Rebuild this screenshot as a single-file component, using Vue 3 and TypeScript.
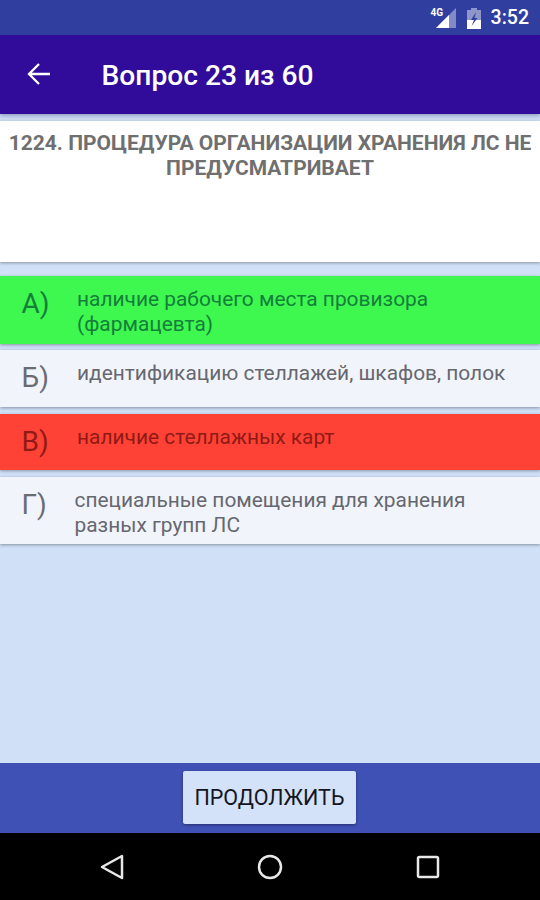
<script setup lang="ts">
interface Answer { letter: string; text: string; kind: string; }
const answers: Answer[] = [
  { letter: 'А)', text: 'наличие рабочего места провизора (фармацевта)', kind: 'a' },
  { letter: 'Б)', text: 'идентификацию стеллажей, шкафов, полок', kind: 'b' },
  { letter: 'В)', text: 'наличие стеллажных карт', kind: 'c' },
  { letter: 'Г)', text: 'специальные помещения для хранения разных групп ЛС', kind: 'd' },
];
</script>

<template>
  <div class="screen">
    <div class="status">
      <div class="net">
        <span class="four-g">4G</span>
        <svg width="20" height="20" viewBox="0 0 20 20">
          <path d="M20 0V20H0Z" fill="#fff" fill-opacity="0.4" />
          <path d="M13 7V20H0Z" fill="#fff" />
        </svg>
      </div>
      <svg class="battery" width="14" height="21" viewBox="0 0 14 21">
        <path d="M4 0h6v2h4v19H0V2h4Z" fill="#fff" fill-opacity="0.45" />
        <path d="M0 12h14v9H0Z" fill="#fff" />
        <path d="M9 4 4 12h3l-2.500 6 6-8H7.500Z" fill="#303f9f" />
      </svg>
      <span class="time">3:52</span>
    </div>
    <header class="appbar">
      <svg class="back" width="24" height="24" viewBox="0 0 24 24">
        <path d="M23 12H2M12 2 2 12l10 10" fill="none" stroke="#fff" stroke-width="2.300" />
      </svg>
      <h1>Вопрос 23 из 60</h1>
    </header>
    <main class="content">
      <section class="question">1224. ПРОЦЕДУРА ОРГАНИЗАЦИИ ХРАНЕНИЯ ЛС НЕ ПРЕДУСМАТРИВАЕТ</section>
      <div class="answers">
        <div v-for="a in answers" :key="a.kind" class="answer" :class="a.kind">
          <span class="letter">{{ a.letter }}</span>
          <span class="text">{{ a.text }}</span>
        </div>
      </div>
    </main>
    <footer class="footer">
      <button class="next" type="button">ПРОДОЛЖИТЬ</button>
    </footer>
    <nav class="navbar">
      <svg width="26" height="28" viewBox="0 0 26 28">
        <path d="M23 3V25L3 14Z" fill="none" stroke="#e8e8e8" stroke-width="2.500" stroke-linejoin="round" />
      </svg>
      <svg width="26" height="26" viewBox="0 0 26 26">
        <circle cx="13" cy="13" r="11" fill="none" stroke="#e8e8e8" stroke-width="2.500" />
      </svg>
      <svg width="24" height="24" viewBox="0 0 24 24">
        <rect x="2" y="2" width="20" height="20" rx="1.500" fill="none" stroke="#e8e8e8" stroke-width="2.500" />
      </svg>
    </nav>
  </div>
</template>

<style>
html, body { margin: 0; padding: 0; }
</style>

<style scoped>
.screen {
  width: 540px;
  height: 900px;
  display: flex;
  flex-direction: column;
  background: #cfe0f7;
  font-family: Roboto, "Noto Sans", sans-serif;
  overflow: hidden;
}
.status {
  height: 35px;
  flex: none;
  background: #303f9f;
  display: flex;
  align-items: center;
  justify-content: flex-end;
  padding-right: 11px;
  color: #fff;
  box-sizing: border-box;
}
.net {
  position: relative;
  width: 20px;
  height: 20px;
  margin-right: 11px;
  margin-top: 1px;
}
.four-g {
  position: absolute;
  left: -5px;
  top: -1px;
  font-size: 10px;
  font-weight: 700;
  line-height: 12px;
}
.battery { margin-right: 10px; margin-top: 1px; }
.time { font-size: 19.500px; font-weight: 500; }
.appbar {
  height: 79px;
  flex: none;
  background: #310c9a;
  display: flex;
  align-items: center;
  padding-left: 27px;
  box-sizing: border-box;
  position: relative;
  box-shadow: 0 2px 4px rgba(60, 60, 120, 0.4);
}
.back { flex: none; margin-top: -1px; }
h1 {
  margin: 2px 0 0 50.500px;
  color: #fff;
  font-size: 28.200px;
  font-weight: 500;
  line-height: 30px;
}
.content {
  flex: 1;
  min-height: 0;
  padding-top: 7px;
}
.question {
  height: 141px;
  box-sizing: border-box;
  background: #fff;
  padding: 10px 6px 0;
  text-align: center;
  color: #6f6f6f;
  font-size: 21px;
  font-weight: 700;
  line-height: 25px;
  box-shadow: 0 1px 3px rgba(0, 0, 0, 0.35);
}
.answers {
  margin-top: 14px;
  display: flex;
  flex-direction: column;
  gap: 6px;
}
.answer {
  display: flex;
  align-items: flex-start;
  box-sizing: border-box;
  box-shadow: 0 1px 3px rgba(0, 0, 0, 0.35);
  background: #f2f4fc;
  color: #66686f;
}
.letter {
  flex: none;
  font-size: 28px;
  line-height: 34px;
  padding-left: 21.500px;
  width: 77px;
  box-sizing: border-box;
  color: #6a6c72;
}
.text { font-size: 20.900px; line-height: 25px; flex: 1; padding-right: 10px; }
.a { height: 68px; background: #3ef850; color: #14803a; padding-top: 11px; }
.a .letter { color: #14803a; }
.b { height: 57px; padding-top: 11px; }
.c { height: 56px; margin-top: 1px; background: #ff4235; color: #8f1a16; padding-top: 11px; }
.c .letter { color: #8f1a16; }
.d { height: 67px; margin-top: 1px; padding-top: 11px; }
.d .letter { width: 74.500px; }
.footer {
  height: 70px;
  flex: none;
  background: #3f51b5;
  display: flex;
  align-items: flex-start;
  justify-content: center;
  padding-top: 8px;
  box-sizing: border-box;
}
.next {
  width: 173px;
  height: 53px;
  margin-right: 1px;
  border: 0;
  border-radius: 2px;
  background: #d3e2f8;
  color: #15151f;
  font-family: inherit;
  font-size: 21.500px;
  font-weight: 400;
  padding: 0;
  box-shadow: 0 1px 3px rgba(0, 0, 0, 0.4);
}
.navbar {
  height: 67px;
  flex: none;
  background: #000;
  display: grid;
  grid-template-columns: 1fr 1fr 1fr;
  justify-items: center;
  align-items: center;
  padding: 0 33px;
}
</style>
